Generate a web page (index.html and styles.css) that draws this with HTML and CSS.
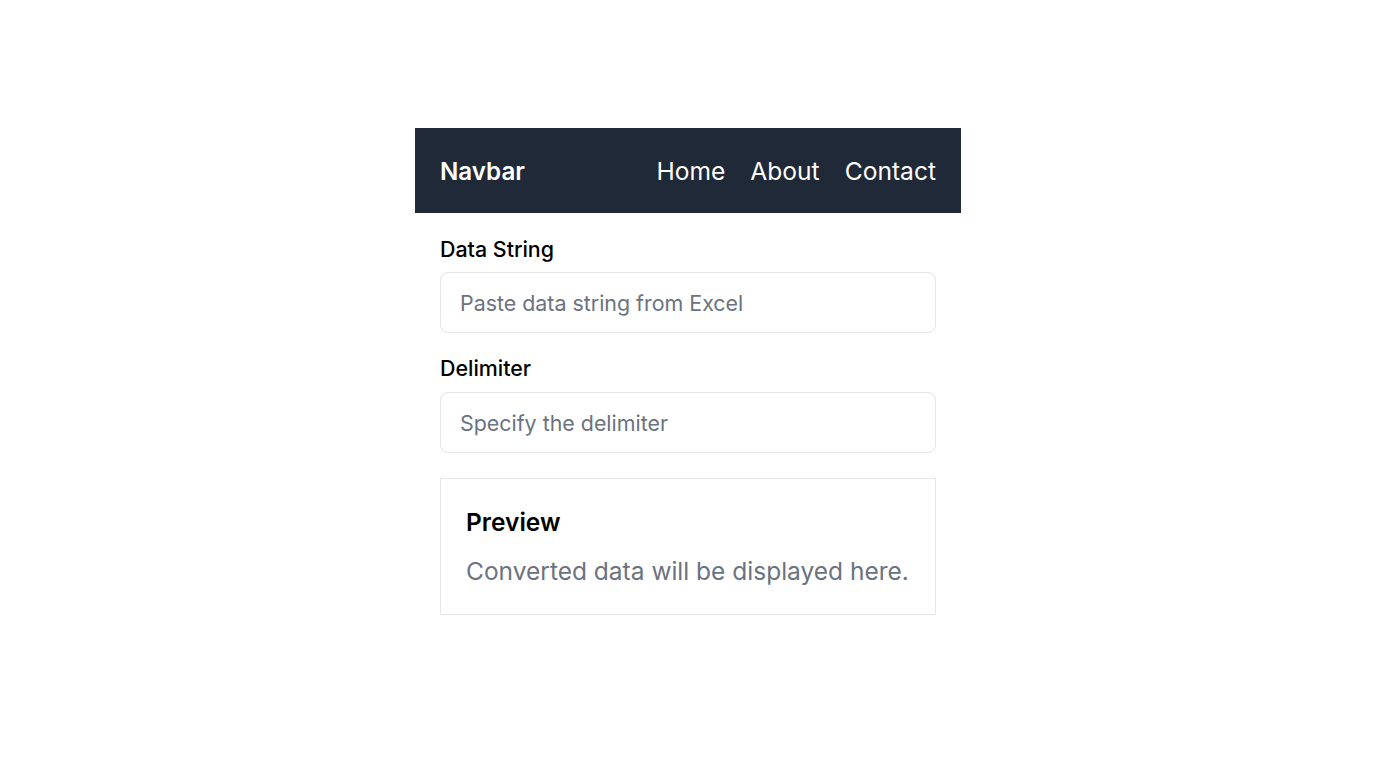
FILE: index.html
```html
<!DOCTYPE html>
<html lang="en">
<head>
<meta charset="utf-8">
<title>Data Converter</title>
<link rel="stylesheet" href="styles.css">
</head>
<body>
<div class="page">
  <div class="app">
    <nav class="navbar">
      <span class="brand">Navbar</span>
      <div class="links">
        <a href="#">Home</a>
        <a href="#">About</a>
        <a href="#">Contact</a>
      </div>
    </nav>
    <main class="content">
      <div class="field">
        <label class="label" for="data">Data String</label>
        <input class="input" id="data" type="text" placeholder="Paste data string from Excel">
      </div>
      <div class="field field-second">
        <label class="label" for="delim">Delimiter</label>
        <input class="input" id="delim" type="text" placeholder="Specify the delimiter">
      </div>
      <section class="preview">
        <h2 class="preview-title">Preview</h2>
        <p class="preview-text">Converted data will be displayed here.</p>
      </section>
    </main>
  </div>
</div>
</body>
</html>
```

FILE: styles.css
```css
* { box-sizing: border-box; }
html, body { margin: 0; padding: 0; background: #ffffff; }
body { font-family: Inter, "Noto Sans", sans-serif; color: #000; }
.page { display: flex; justify-content: center; padding-top: 128px; }
.app { width: 546px; }
.navbar {
  background: #1f2937;
  height: 85px;
  padding: 1px 25px 0;
  display: flex;
  align-items: center;
  justify-content: space-between;
  color: #fff;
}
.brand { font-size: 24.2px; font-weight: 600; }
.links { display: flex; gap: 25px; }
.links a { color: #fff; text-decoration: none; font-size: 24.6px; }
.content { padding: 21px 25px 20px; }
.field { display: flex; flex-direction: column; margin-bottom: 20px; }
.field-second .label { margin-bottom: 9px; }
.label { font-size: 21.4px; font-weight: 500; line-height: 30px; margin-bottom: 8px; }
.input {
  height: 61px;
  border: 1px solid #e2e4e8;
  border-radius: 8px;
  padding: 0 19px;
  font-family: inherit;
  font-size: 21.4px;
  color: #111;
  outline: none;
}
.input::placeholder { color: #6b7280; }
.preview {
  margin-top: 25px;
  border: 1px solid #e5e7eb;
  padding: 27px 25px 25px;
}
.preview-title { margin: 0 0 15px; font-size: 24.5px; font-weight: 600; line-height: 32px; }
.preview-text { margin: 0; font-size: 24.5px; color: #6b7280; line-height: 36px; }
```
